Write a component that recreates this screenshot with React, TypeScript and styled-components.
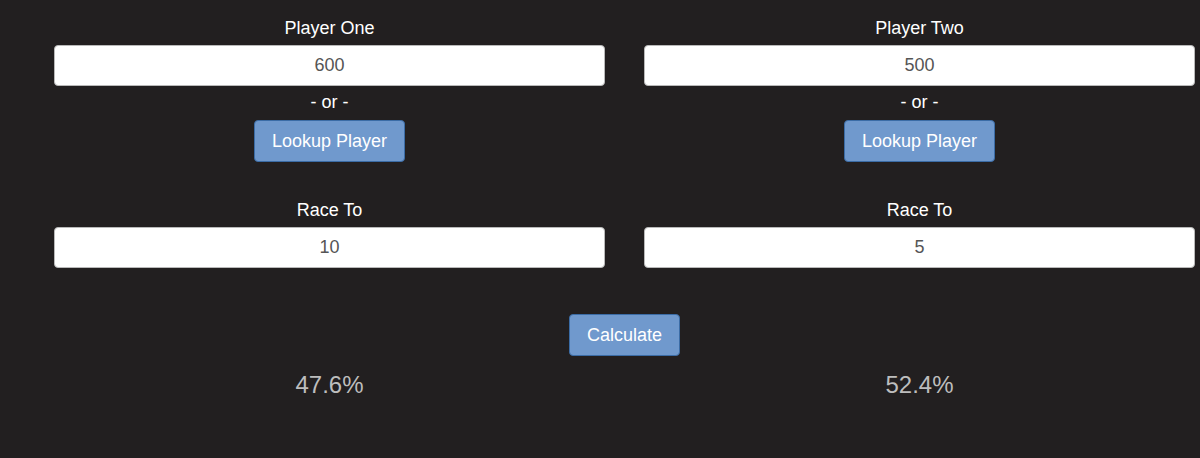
import React from "react";
import styled, { createGlobalStyle } from "styled-components";

const GlobalStyle = createGlobalStyle`
  html, body {
    margin: 0;
    background: #221f20;
    font-family: "Liberation Sans", Arial, sans-serif;
    overflow: hidden;
  }
`;

const Page = styled.div`
  width: 1200px;
  height: 458px;
  padding-top: 17px;
  box-sizing: border-box;
`;

const Container = styled.div`
  width: 1180px;
  margin-left: 34.5px;
`;

const Row = styled.div<{ $mt?: number }>`
  display: flex;
  margin-top: ${(p) => p.$mt ?? 0}px;
`;

const Col = styled.div`
  width: 590px;
  flex: 0 0 590px;
  padding: 0 19.5px;
  box-sizing: border-box;
  display: flex;
  flex-direction: column;
  align-items: center;
`;

const Label = styled.div`
  color: #ffffff;
  font-size: 18px;
  line-height: 22px;
  margin-bottom: 6px;
`;

const Input = styled.input`
  width: 100%;
  height: 41px;
  box-sizing: border-box;
  border: 1px solid #b9b9b9;
  border-radius: 4px;
  background: #ffffff;
  color: #555555;
  font-family: inherit;
  font-size: 18px;
  text-align: center;
  outline: none;
`;

const Or = styled.div`
  color: #ffffff;
  font-size: 18px;
  line-height: 20px;
  margin: 6px 0 8px;
`;

const Button = styled.button`
  background: #7099cd;
  border: 1px solid #3b6ca6;
  border-radius: 4px;
  color: #ffffff;
  font-family: inherit;
  font-size: 18px;
  height: 42px;
  padding: 0 17px;
  cursor: pointer;
`;

const Center = styled.div`
  display: flex;
  justify-content: center;
  margin-top: 46px;
`;

const Result = styled.div`
  color: #bdbdbd;
  font-size: 24px;
  line-height: 24px;
`;

const players = [
  { name: "Player One", rating: "600", race: "10", pct: "47.6%" },
  { name: "Player Two", rating: "500", race: "5", pct: "52.4%" },
];

export default function App() {
  return (
    <Page>
      <GlobalStyle />
      <Container>
        <Row>
          {players.map((p) => (
            <Col key={p.name}>
              <Label>{p.name}</Label>
              <Input defaultValue={p.rating} />
              <Or>- or -</Or>
              <Button>Lookup Player</Button>
            </Col>
          ))}
        </Row>
        <Row $mt={37}>
          {players.map((p) => (
            <Col key={p.name}>
              <Label>Race To</Label>
              <Input defaultValue={p.race} />
            </Col>
          ))}
        </Row>
        <Center>
          <Button>Calculate</Button>
        </Center>
        <Row $mt={17}>
          {players.map((p) => (
            <Col key={p.name}>
              <Result>{p.pct}</Result>
            </Col>
          ))}
        </Row>
      </Container>
    </Page>
  );
}
